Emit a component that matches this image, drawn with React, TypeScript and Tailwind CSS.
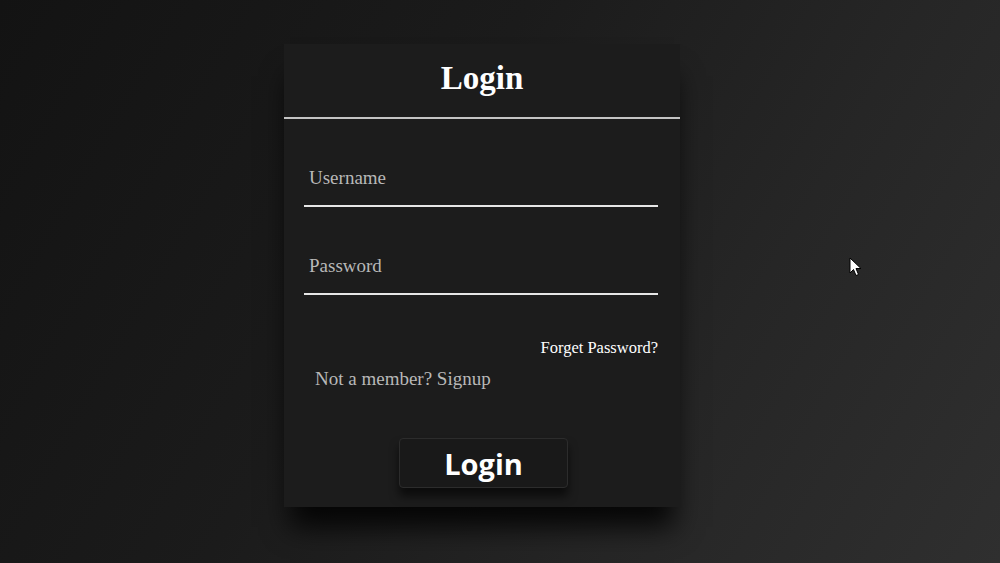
import React from "react";

export default function App() {
  const serif = { fontFamily: '"Liberation Serif", "Times New Roman", serif' };
  return (
    <div className="relative w-[1000px] h-[563px] overflow-hidden bg-[linear-gradient(120deg,#131313_0%,#1b1b1b_40%,#262626_70%,#2f2f2f_100%)]">
      <div className="pl-[284px] pt-[44px]">
        <div
          className="w-[396px] h-[463px] bg-[#1c1c1c] shadow-[0_26px_26px_-6px_rgba(0,0,0,0.85)] flex flex-col"
          style={serif}
        >
          <div className="h-[73px] flex items-start justify-center pt-[18px]">
            <h1 className="text-[33px] font-bold text-white leading-none">Login</h1>
          </div>
          <div className="h-[2px] bg-[#c4c4c4] mb-[45px]" />
          <div className="pl-[20px] pr-[22px] flex flex-col">
            <div className="h-[43px] border-b-2 border-[#e6e6e6] flex items-start pl-[5px]">
              <span className="text-[19px] text-[#b8b8b8] leading-[28px]">Username</span>
            </div>
            <div className="h-[45px]" />
            <div className="h-[43px] border-b-2 border-[#e6e6e6] flex items-start pl-[5px]">
              <span className="text-[19px] text-[#b8b8b8] leading-[28px]">Password</span>
            </div>
            <div className="mt-[43px] flex justify-end">
              <span className="text-[16.5px] text-white leading-[20px]">Forget Password?</span>
            </div>
            <div className="mt-[10px] pl-[11px]">
              <span className="text-[19px] text-[#b8b8b8] leading-[22px]">Not a member? Signup</span>
            </div>
          </div>
          <div className="mt-[46px] flex justify-center pl-[3px]">
            <button
              className="w-[169px] h-[50px] rounded-[4px] bg-[#191919] border border-[#2c2c2c] shadow-[0_8px_10px_rgba(0,0,0,0.6)] text-white text-[29px] font-bold leading-none"
              style={{ fontFamily: '"Open Sans", "Noto Sans", sans-serif' }}
            >
              Login
            </button>
          </div>
        </div>
      </div>
      <svg
        className="absolute left-[849px] top-[257px]"
        width="14"
        height="21"
        viewBox="0 0 14 21"
      >
        <path
          d="M1 1 L1 16 L4.5 12.5 L7 18.5 L9.5 17.5 L7 11.5 L12 11.5 Z"
          fill="#ffffff"
          stroke="#000000"
          strokeWidth="1"
          strokeLinejoin="round"
        />
      </svg>
    </div>
  );
}
